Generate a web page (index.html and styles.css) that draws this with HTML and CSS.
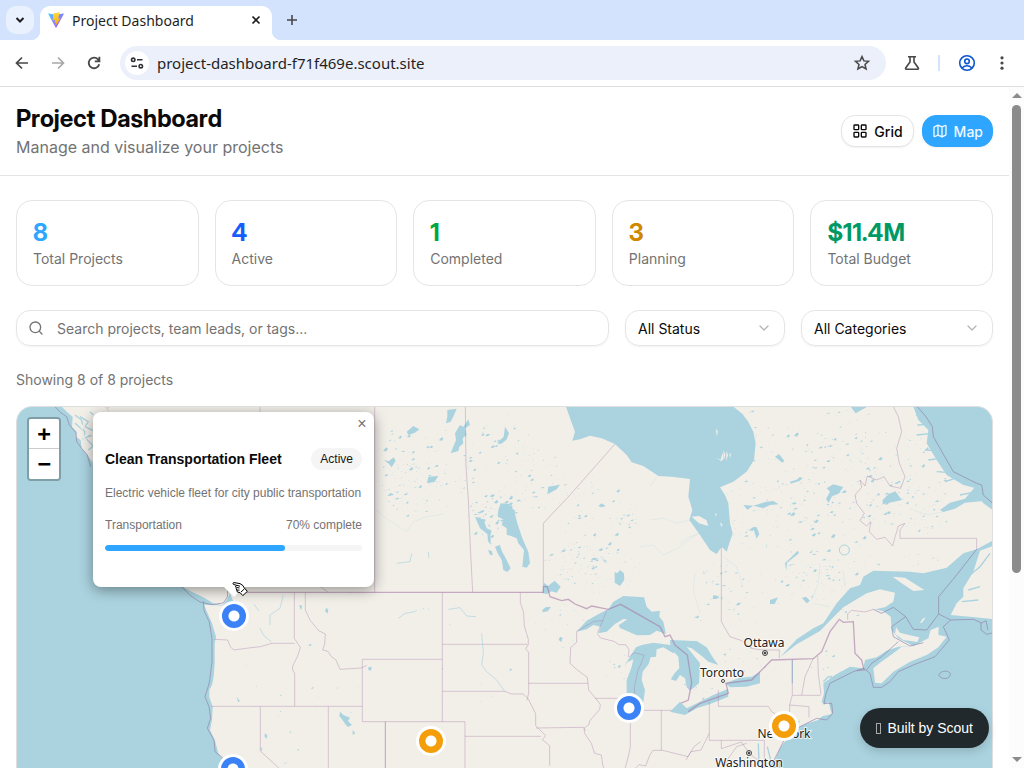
FILE: index.html
```html
<!DOCTYPE html>
<html lang="en">
<head>
<meta charset="utf-8">
<title>Project Dashboard</title>
<link rel="stylesheet" href="styles.css">
</head>
<body>
<div class="browser">
  <div class="tab-strip">
    <button class="tab-search" aria-label="Search tabs"><svg width="10" height="8" viewBox="0 0 10 8"><path d="M1.5 2 5 5.5 8.5 2" fill="none" stroke="#1f1f1f" stroke-width="2"/></svg></button>
    <div class="tab">
      <svg width="16" height="16" viewBox="0 0 16 16"><defs><linearGradient id="va" x1="0" y1="0" x2="1" y2="1"><stop offset="0" stop-color="#41d1ff"/><stop offset="1" stop-color="#bd34fe"/></linearGradient><linearGradient id="vb" x1="0" y1="0" x2="0" y2="1"><stop offset="0" stop-color="#ffd83a"/><stop offset="1" stop-color="#ffa800"/></linearGradient></defs><path d="M.3 2 7.600 15.500q.4.6.8 0L15.800 2q.2-.6-.6-.5L8 2.800.8 1.500Q.1 1.400.3 2z" fill="url(#va)"/><path d="M11.600.3 5.200 1.500l-.4 7 2.400-.5-.6 3 1.400-.4-.8 4L12.400 6.200l-2.200.2z" fill="url(#vb)"/></svg>
      <span class="tab-title">Project Dashboard</span>
      <button class="plain" aria-label="Close tab"><svg width="10" height="10" viewBox="0 0 10 10"><path d="M1.500 1.500l7 7m0-7-7 7" stroke="#1f1f1f" stroke-width="1.700"/></svg></button>
    </div>
    <button class="plain new-tab" aria-label="New tab"><svg width="12" height="12" viewBox="0 0 12 12"><path d="M6 1v10M1 6h10" stroke="#474747" stroke-width="1.600"/></svg></button>
  </div>
  <div class="toolbar">
    <div class="navs">
      <button class="plain nav" aria-label="Back"><svg width="16" height="16" viewBox="0 0 16 16" fill="none" stroke="#474747" stroke-width="1.700"><path d="M14 8H3M8 2.500 2.500 8 8 13.500"/></svg></button>
      <button class="plain nav" aria-label="Forward"><svg width="16" height="16" viewBox="0 0 16 16" fill="none" stroke="#a8a8a8" stroke-width="1.700"><path d="M2 8h11M8 2.500 13.500 8 8 13.500"/></svg></button>
      <button class="plain nav" aria-label="Reload"><svg width="16" height="16" viewBox="0 0 16 16" fill="none" stroke="#474747" stroke-width="1.800"><path d="M13.200 9.200A5.300 5.300 0 1 1 12 4.400L13.200 6M13.400 1.800v4.600H8.800"/></svg></button>
    </div>
    <div class="address">
      <button class="site-info" aria-label="Site information"><svg width="14" height="14" viewBox="0 0 14 14" fill="none" stroke="#303134" stroke-width="1.600"><circle cx="3.200" cy="3.800" r="1.700"/><path d="M7 3.800h5.500M1.500 10.200H7"/><circle cx="10.800" cy="10.200" r="1.700"/></svg></button>
      <input class="url" aria-label="Address" value="project-dashboard-f71f469e.scout.site">
      <button class="plain" aria-label="Bookmark"><svg width="18" height="18" viewBox="0 0 18 18" fill="none" stroke="#474747" stroke-width="1.500"><path d="m9 2.600 1.900 4.300 4.600.4-3.500 3.100 1.100 4.600L9 12.600 4.900 15 6 10.400 2.500 7.300l4.600-.4z"/></svg></button>
    </div>
    <button class="plain" aria-label="Labs"><svg width="16" height="16" viewBox="0 0 16 16" fill="none" stroke="#474747" stroke-width="1.600"><path d="M4 1.800h8M6 2v5L1.700 13q-.5 1.200.6 1.200h11.400q1.100 0 .6-1.200L10 7V2"/></svg></button>
    <span class="divider"></span>
    <button class="plain" aria-label="Profile"><svg width="18" height="18" viewBox="0 0 18 18" fill="none" stroke="#0b57d0" stroke-width="1.600"><circle cx="9" cy="9" r="7.300"/><circle cx="9" cy="7.300" r="2.300"/><path d="M4 14q5-4.500 10 0"/></svg></button>
    <button class="plain menu" aria-label="Menu"><svg width="4" height="16" viewBox="0 0 4 16" fill="#474747"><circle cx="2" cy="2.800" r="1.600"/><circle cx="2" cy="8" r="1.600"/><circle cx="2" cy="13.200" r="1.600"/></svg></button>
  </div>
  <div class="viewport">
    <div class="page">
      <header class="page-header">
        <div>
          <h1>Project Dashboard</h1>
          <p>Manage and visualize your projects</p>
        </div>
        <div class="view-switch">
          <button class="view"><svg width="16" height="16" viewBox="0 0 24 24"><rect x="3" y="3" width="7" height="7" rx="1"/><rect x="14" y="3" width="7" height="7" rx="1"/><rect x="14" y="14" width="7" height="7" rx="1"/><rect x="3" y="14" width="7" height="7" rx="1"/></svg>Grid</button>
          <button class="view view-active"><svg width="16" height="16" viewBox="0 0 24 24"><path d="M14.106 5.553a2 2 0 0 0 1.788 0l3.659-1.830A1 1 0 0 1 21 4.619v12.764a1 1 0 0 1-.553.894l-4.553 2.277a2 2 0 0 1-1.788 0l-4.212-2.106a2 2 0 0 0-1.788 0l-3.659 1.830A1 1 0 0 1 3 19.381V6.618a1 1 0 0 1 .553-.894l4.553-2.277a2 2 0 0 1 1.788 0zM15 5.764v15M9 3.236v15"/></svg>Map</button>
        </div>
      </header>
      <main>
        <section class="stats">
          <div class="stat"><strong class="sky">8</strong><span>Total Projects</span></div>
          <div class="stat"><strong class="blue">4</strong><span>Active</span></div>
          <div class="stat"><strong class="green">1</strong><span>Completed</span></div>
          <div class="stat"><strong class="amber">3</strong><span>Planning</span></div>
          <div class="stat"><strong class="emerald">$11.4M</strong><span>Total Budget</span></div>
        </section>
        <div class="filters">
          <label class="field search"><svg width="16" height="16" viewBox="0 0 24 24"><circle cx="11" cy="11" r="8"/><path d="m21 21-4.300-4.300"/></svg><input type="text" aria-label="Search projects" placeholder="Search projects, team leads, or tags..."></label>
          <label class="field status"><select aria-label="Status"><option>All Status</option></select><svg width="16" height="16" viewBox="0 0 24 24"><path d="m6 9 6 6 6-6"/></svg></label>
          <label class="field category"><select aria-label="Category"><option>All Categories</option></select><svg width="16" height="16" viewBox="0 0 24 24"><path d="m6 9 6 6 6-6"/></svg></label>
        </div>
        <p class="count">Showing 8 of 8 projects</p>
        <section class="map" aria-label="Project map">
          <svg class="tiles" width="975" height="598" viewBox="17 407 975 598">
            <rect x="17" y="407" width="975" height="598" fill="#f2efe9"/>
            <g id="lakes" class="water"></g>
            <g transform="translate(0 400) scale(.333333)">
              <path class="water" d="M0 20H185L205 40 218 50 216 80 230 95 228 110 242 120 245 145 262 165 280 190 400 430 548 560 575 575 610 592 640 610 668 616 680 600 690 580 700 605 684 618 650 616 612 614 625 645 636 670 648 710 644 730 644 790 641 830 636 855 628 870 628 892 638 920 636 960 630 990 645 1022 655 1060 690 1104 640 1120V1820H0Z"/>
              <path class="inlet" d="M240 50l25 15-10 15 25 12M225 70l30 25-5 20 25-8M250 120l20-15M265 150l15-12-20-20M270 35l10 10M225 45l20 15 5 30"/>
              <path class="land" d="M236 55l8 16 10 8-6 12-12-16zM242 90l10 14 12 30-12-10zM570 562l40 10 34 26 12 14-24-8-30-22z"/>
              <path class="sea-line" d="M165 20 182 38 200 50 208 75 228 98 230 125 245 145 262 165 272 200M545 560l25 26 30 20 35 8 35-5 12-18 2-24M610 604l2 28 16 34 8 50v70l-8 62-13 42 12 30 5 35-10 30 20 35 3 35 25 20"/>
              <path class="state" d="M325 20v4M780 20v20M1124 20v558M316 20l10 12M883 578v137l18 28-8 25-15 30v12l6 10v98M643 718l40 2 8 20 10 10 45-6 35-4 35-10h68M916 578v52l14 30 26 32 20 10-2 30-6 18 16 4 8 14 16 12 12 28 64-4 16-8M635 919h452M781 920v133l60 55M985 920v184M1156 965v140M961 560l24 17"/>
              <path class="nation" d="M690 577H1052"/>
              <path class="river" d="M850 585l-10 40-30 20v30M762 613l15 20M780 685l10 20 25 22"/>
              <path class="water" d="M1020 935l10 10 20 8-6 10 12 12-12 6-8-8-10-15-8-10zM975 633l4-10 6 6-2 12zM897 615l10 2-4 14zM794 1000l8 6-2 10-6-6zM1105 802l10-2-2 12-8-2zM710 890l10 14-6 2zM779 1043h8l-3 12zM1058 990l8 10-8 4z"/>
            </g>
            <g transform="translate(360 400) scale(.333333)">
              <path class="water" d="M415 330 422 310 445 312 462 330 472 370 487 415 505 455 510 490 500 503 487 500 492 450 475 430 470 415 453 408 440 404 440 385 425 375 430 358 413 350ZM345 350 370 358 380 385 395 392 390 410 382 402 360 385ZM382 400l10 8 0 26-8-10zM384 450l12 4 2 12-8-2zM405 440l14-6 8 22 10 18 15 31-10 11-12-6-5-30-12-20zM325 58 330 75 315 85 320 105 308 115 310 130 298 140 295 153 272 160 288 120 285 100 300 75 310 80ZM262 30 290 26 280 50 272 65 258 70 262 50ZM140 95 160 78 178 88 165 98 145 105ZM435 80l12 20-8 20-16 12-12-2 20-20zM72 180l14 4 15-12 6 10-12 20-8-10zM205 230l30-2-12 18-22 4zM565 260l35-6-10 14-28 15zM764 516 772 520 780 510 792 520 793 540 780 558 764 548ZM552 548l12 10 20-16 18 18-12 18-16-4-12 8-15-2zM547 630l10-8 16-2-10 14-15 3zM600 710l8 4-4 12-8-6zM715 318l10-8 12 8-12 4z"/>
              <path class="water" d="M650 695 680 662 720 640 745 628 760 605 790 588 852 592 860 620 875 635 900 632 898 650 910 665 918 702 890 692 870 705 830 706 806 695 780 684 776 676 802 658 790 657 765 672 740 695 715 700 722 680 700 675 680 688ZM793 798 810 770 828 742 845 735 880 728 930 735 955 748 940 760 910 742 890 748 888 770 872 772 866 792 848 815 845 840 855 870 850 905 835 930 815 915 800 880 800 840 815 800 820 778 803 786ZM930 720 980 722 1020 735 1035 748 1005 744 980 740 1000 765 1020 790 1017 850 990 872 980 862 975 835 960 825 948 843 932 838 945 818 958 805 955 770 932 745Z"/>
              <path class="state" d="M316 20 318 200 325 300 331 440 338 577M765 132 630 285 550 370V560M247 578V965M7 778H247M7 778v187H315v145M247 733H502M247 874H435l20 8 35 0 15 15 15 30 7 15 0 35 30 30-10 12 22 18v60M481 578v30l10 30 2 40 12 40v15l-8 14 9 10v122l-5 22M506 850h178M684 850l2 20 15 18 20 25-2 15-30 35-2 10-15 12 2 15 20 30 10 30 20 5 5 35 13 12M528 984l142-2 7 10M315 1009H543M705 895H780M650 695v32l-18 15-2 48 22 20 30 22 2 18M712 702l10 12 40 10 15 10 20 0 10 15-2 22M811 960v80l-5 25-12 45M850 931H960M904 931v120l-25 0-10 15-12 32-20-4-15 15M904 1050l40 10 40 10 18-30 20-15M76 965v140M728 663l12-32M712 700l16-38-26 2-52 30M808 770l15-12 30 8-20 48-10 50 3 36"/>
              <path class="nation" d="M-30 577H550V560H562L570 590 605 602 625 598 645 612 680 626 695 618 745 628 782 613 900 680 915 710 930 705 945 735 982 765 995 848 985 900 962 910 968 928 985 935"/>
              <path class="river" d="M265 628l35-5 20 25 27 2M115 655l20-15 30-5 5-5M365 700l5 60-5 35 15 20 30 25 25 35M110 490l40-5 5-25M205 455l2 20"/>
              <path class="faint" d="M870 360l40-5 40 15 40-10M840 440l40-5 30 30 40-18 40-30 30-20M890 230l-20 30M50 330l20 20 70 45 20-30 40-15 50-8"/>
            </g>
            <g transform="translate(680 400) scale(.333333)">
              <path class="water" d="M-342 20 -328 60 -315 95 -323 122 -300 118 -270 107 -235 115 -195 132 -160 165 -145 187 -110 198 -65 228 -25 230 30 237 25 290 37 330 28 360 60 405 90 450 110 462 125 440 140 455 148 430 158 400 150 370 145 310 135 285 120 262 160 245 200 215 222 180 227 130 220 95 205 65 185 40 160 20Z"/>
              <path class="land" d="M35 350l22-2 22 12 6 18-28-8zM108 172l14 8 6-22 3 18-8 8zM130 150l6 14-4 14zM140 152l4 14-6 18zM148 164l5-6-2 16zM108 85l6 10-4 14zM120 368l8 5-4 8zM105 338l6 6-4 5z"/>
              <path class="water" d="M0 722 50 723 80 742 100 775 115 795 85 785 68 770 35 745 0 735ZM-30 935 0 905 20 925 60 905 100 885 143 867 145 890 90 912 50 925 15 945ZM135 850 180 833 215 830 240 815 240 850 200 860 150 862ZM190 315l30 2 40-12 20-2 16 10-26 2-20 10-30-8-18 12zM440 265l20-12 30 8-14 20-20 8-10 20-8-12 12-22zM608 300l18-18 20-8 20 26-24 5-34 8zM315 490l38-38 4 8-36 28-2 24zM366 594l12-4 12 12-10 8zM270 600l24-8-10 20-14 0zM285 170l12-8 16 20-6 6zM100 585l16 4-6 8-12 0zM218 380l12 2 8 20-8 14zM330 245l40-12-12 10-26 8zM512 20h50l-35 20zM780 330l30-22 45-12 30-35 35 10-25 20 15 12-55 5-30 18-35 10z"/>
              <path class="water" d="M700 20 715 60 745 90 740 130 770 180 800 225 850 255 900 268 890 285 910 310 960 345V20ZM960 410 890 448 850 460 800 503 730 520 690 515 580 512 550 530 540 555 510 565 470 610 430 670 400 685 350 718 300 772 350 733 420 693 460 652 490 622 560 580 600 568 645 578 640 605 615 622 585 628 610 634 632 650 635 690 655 715 700 738 655 740 620 752 590 772 555 780 550 805 510 800 465 825 430 850 432 880 425 905 432 915 445 905 455 942 420 950 395 962 350 985 360 962 325 972 332 1000 300 1045 275 1104V1820H1000Z"/>
              <path class="land" d="M580 805 600 788 640 760 665 740 700 738 745 715 752 690 776 680 775 705 800 710 775 742 740 765 690 785 640 815 605 850 585 848ZM648 682 660 698 690 706 718 712 712 726 670 720 645 702ZM638 530 675 533 733 570 700 573 665 550ZM960 430 900 452 880 515 850 565 850 590 830 610 812 645 870 650 960 660ZM720 668l8-12 10-4-12 16zM360 965l70-20-15 15-40 12z"/>
              <path class="inlet" d="M708 45l20 5M712 75l30-2M710 105l45-5M735 150l30 2M745 180l30-4M770 215l30 2M795 245l25-8M840 285l50-10M430 845l15-15 20 5 20-20M337 780v70M235 1030l2 60M262 1040l10 40M930 460l-30 40-30 25M900 560l-35 10M895 600l-50 5"/>
              <path class="sea-line" d="M712 20 738 50 757 80 760 110 800 180 820 215 890 250 905 255 910 285 940 312M890 448 830 525 776 590V642L740 690 700 688 677 650 640 622 605 640 580 628M776 642 812 660 880 658 903 668 903 690 920 703 940 698M903 670l15-8 6 28M812 660 790 680 808 720 765 770 700 795 655 815 630 845 605 862 580 862 570 820 550 805 520 815 450 850 438 880 432 910 455 910 458 940 440 960 410 955 350 985 315 1015 290 1065 270 1104M677 650l-42 30 5 30 50 28 40-10M655 725l-50 45-30 20-15 20M776 825c5-15 35-15 35-2s-25 20-35 2"/>
              <path class="state" d="M640 20 655 50 665 95 650 145 658 190 675 230 662 265 630 258 612 230 590 240 562 228 555 258 540 240 545 262 525 285 530 310 553 340 540 362 560 378 572 365 568 395 590 418 615 412 638 438 645 412 655 378 675 370 660 390 660 415H890V450M124 440V665L150 710 185 722 215 745 245 750 298 750V775M115 870V919H265L275 935 300 950M88 905V1021H253V1104M337 778v106l-8 30v35M337 886h85M329 915l58 5v32M413 768l2 55 8 60M400 775l-25 55-10 55M88 1000l-25 50-30 5-15 25M124 1021v25l30-10 30-10 25 35 25 20M200 1030l-30 10-25 35-15 29M580 628l-25 8-40-5-12 10v18"/>
              <path class="nation" d="M25 935 60 910 145 880 138 850 215 840 275 780 400 776 425 755 450 695 478 658 490 667 520 665 525 760 545 780 552 810 530 812"/>
              <circle class="ring" cx="493" cy="450" r="15"/>
              <path class="faint" d="M0 430l25-18 30-10M130 470l40 30 20 60M420 490l-5 60-20 50M400 610l50 10M700 330l40 15 50-10M490 510l5 50M45 520l-5 50 20 70"/>
            </g>
            <g class="places">
              <text x="764" y="647">Ottawa</text><circle cx="765" cy="653" r="2.500"/><circle class="dot" cx="765" cy="653" r="1"/>
              <text x="722" y="677">Toronto</text><circle cx="723" cy="681" r="1.500"/>
              <text x="784" y="738">New York</text>
              <text x="749" y="767">Washington</text><circle cx="749" cy="753" r="2.500"/><circle class="dot" cx="749" cy="753" r="1"/>
            </g>
          </svg>
          <button class="pin pin-active seattle" aria-label="Clean Transportation Fleet"></button>
          <button class="pin pin-active bay-area" aria-label="San Francisco project"></button>
          <button class="pin pin-planning denver" aria-label="Denver project"></button>
          <button class="pin pin-active chicago" aria-label="Chicago project"></button>
          <button class="pin pin-planning new-york" aria-label="New York project"></button>
          <div class="zoom"><button aria-label="Zoom in">+</button><button aria-label="Zoom out">−</button></div>
          <article class="popup">
            <button class="popup-close" aria-label="Close popup">×</button>
            <div class="popup-row"><h2>Clean Transportation Fleet</h2><span class="badge">Active</span></div>
            <p>Electric vehicle fleet for city public transportation</p>
            <div class="popup-row meta"><span>Transportation</span><span>70% complete</span></div>
            <div class="progress"><div class="progress-fill" style="width:70%"></div></div>
            <span class="popup-tip"></span>
          </article>
          <svg class="cursor" width="16" height="16" viewBox="0 0 16 16"><path d="M1 1.500Q1 .6 2 .6l6 1 3 2 1 2 3.300 3.800-4.500 4.200-2.500-2.800-3-.8-.5-2-.8-1.600L4.500 6 3.400 5 4.600 3.300 2 2.600Q1 2.400 1 1.500z" fill="#fff" stroke="#000"/><path d="M4.600 3.300 8 4.200M4.500 5.500l3 .5M5 8l2.500.2M9 10l3.500-3.200" fill="none" stroke="#000"/></svg>
        </section>
      </main>
    </div>
    <div class="scrollbar"><span class="arrow arrow-up"></span><span class="thumb"></span><span class="arrow arrow-down"></span></div>
  </div>
  <button class="scout"><span class="mark"></span>Built by Scout</button>
</div>
<script src="map.js"></script>
</body>
</html>
```
FILE: styles.css
```css
* { box-sizing: border-box; }
body { margin: 0; font-family: Inter, "Liberation Sans", sans-serif; color: #0a0a0a; background: #fff; }
h1, h2, p { margin: 0; }
button, input, select { font: inherit; color: inherit; margin: 0; }
svg { flex: none; display: block; }
.browser { height: 100vh; display: flex; flex-direction: column; overflow: hidden; position: relative; }
.plain { border: 0; background: none; padding: 0; display: flex; align-items: center; justify-content: center; }

.tab-strip { display: flex; height: 40px; background: #d3e3fd; padding: 6px 6px 0; font-family: "Noto Sans", sans-serif; }
.tab-search { width: 28px; height: 28px; border: 0; border-radius: 10px; background: #e9f0fe; padding: 0; display: flex; align-items: center; justify-content: center; }
.tab { display: flex; align-items: center; gap: 8px; width: 232px; margin-left: 6px; padding: 0 11px 6px 8px; background: #fff; border-radius: 10px 10px 0 0; font-size: 14px; color: #1f1f1f; position: relative; }
.tab::before, .tab::after { content: ""; position: absolute; bottom: 0; width: 10px; height: 10px; }
.tab::before { right: 100%; background: radial-gradient(circle at 0 0, #d3e3fd 10px, #fff 11px); }
.tab::after { left: 100%; background: radial-gradient(circle at 100% 0, #d3e3fd 10px, #fff 11px); }
.tab-title { flex: 1; }
.new-tab { height: 28px; width: 40px; }
.toolbar { display: flex; align-items: center; gap: 18px; height: 47px; padding: 0 14px; background: #fff; border-bottom: 1px solid #dcdee2; font-family: "Noto Sans", sans-serif; }
.navs { display: flex; gap: 20px; }
.nav { width: 16px; }
.address { flex: 1; display: flex; align-items: center; height: 34px; padding: 0 15px 0 5px; border-radius: 17px; background: #ecf0fa; }
.site-info { width: 24px; height: 24px; padding: 0; border: 0; border-radius: 50%; background: #fff; display: flex; align-items: center; justify-content: center; }
.url { flex: 1; min-width: 0; border: 0; padding: 0 8px; background: none; font-size: 15px; color: #1f1f1f; }
.divider { width: 2px; height: 16px; background: #d3e3fd; }
.menu { width: 16px; }

.viewport { flex: 1; min-height: 0; display: flex; }
.page { flex: 1; min-width: 0; overflow: hidden; }
.scrollbar { width: 15px; background: #fcfcfc; display: flex; flex-direction: column; align-items: center; padding: 6px 0; }
.arrow { border: 5px solid transparent; border-top-width: 0; border-bottom-width: 0; }
.arrow-up { border-bottom: 5px solid #8b8b8b; }
.arrow-down { border-top: 5px solid #8b8b8b; margin-top: auto; }
.thumb { width: 9px; height: 70%; margin-top: 7px; border-radius: 5px; background: #8b8b8b; }

.page-header { display: flex; align-items: center; justify-content: space-between; padding: 16px; border-bottom: 1px solid #e5e5e5; }
h1, .stat strong { font-family: "Inter Display", Inter, sans-serif; font-variation-settings: "opsz" 24; }
h1 { font-size: 24px; line-height: 32px; font-weight: 700; }
.page-header p { font-size: 16px; line-height: 24px; color: #737373; }
.view-switch { display: flex; gap: 8px; }
.view { display: flex; align-items: center; gap: 6px; height: 32px; padding: 0 10px; border: 1px solid #e5e5e5; border-radius: 14px; background: #fff; box-shadow: 0 1px 2px rgba(0,0,0,.06); font-size: 14px; font-weight: 500; }
.view svg, .field svg { fill: none; stroke: currentColor; stroke-width: 2; stroke-linecap: round; stroke-linejoin: round; }
.view-active { background: #2ea6ff; border-color: #2ea6ff; color: #f0f9ff; padding: 0 9px; }
main { padding: 24px 16px; }
.stats { display: grid; grid-template-columns: repeat(5, 1fr); gap: 16px; }
.stat { display: flex; flex-direction: column; padding: 16px; border: 1px solid #e5e5e5; border-radius: 16px; }
.stat strong { font-size: 24px; line-height: 32px; }
.stat span { font-size: 14px; line-height: 20px; color: #737373; }
.sky { color: #2ea6ff; } .blue { color: #155dfc; } .green { color: #00a63e; } .amber { color: #d08700; } .emerald { color: #009966; }
.filters { display: flex; gap: 16px; margin-top: 24px; }
.field { display: flex; align-items: center; height: 36px; border: 1px solid #e5e5e5; border-radius: 14px; box-shadow: 0 1px 2px rgba(0,0,0,.05); font-size: 14px; padding: 0 12px; }
.field input, .field select { flex: 1; min-width: 0; border: 0; padding: 0; background: none; outline: 0; appearance: none; }
.field input::placeholder { color: #737373; opacity: 1; }
.field svg { color: #b5b5b5; }
.search { flex: 1; gap: 13px; padding: 0 11px; }
.search svg { color: #737373; }
.status { width: 160px; }
.category { width: 192px; }
.count { margin: 24px 0 16px; font-size: 14px; line-height: 20px; color: #737373; }

.map { position: relative; height: 600px; border: 1px solid #dedede; border-radius: 16px; overflow: hidden; background: #aad3df; font-family: "Liberation Sans", sans-serif; }
.water { fill: #aad3df; }
.land { fill: #f2efe9; }
.inlet, .river, .faint { fill: none; stroke: #aad3df; stroke-width: 4; }
.river { stroke-width: 2; }
.faint { stroke-width: 2; opacity: .35; }
.state { fill: none; stroke: #a679a6; stroke-width: 3; opacity: .38; }
.sea-line { fill: none; stroke: #9080a8; stroke-width: 3; opacity: .65; }
.nation { fill: none; stroke: #a679a6; stroke-width: 4; opacity: .6; }
.ring { fill: none; stroke: #aad3df; stroke-width: 3; }
.places { font: 12px "Noto Sans", sans-serif; }
.places text { text-anchor: middle; fill: #222; stroke: #fff; stroke-width: 2px; stroke-opacity: .7; paint-order: stroke; }
.places circle { fill: #fff; stroke: #444; }
.places .dot { fill: #333; }
.pin { position: absolute; width: 30px; height: 30px; margin: -15px 0 0 -15px; padding: 0; border: 3px solid #fff; border-radius: 50%; }
.pin-active { background: radial-gradient(circle, #fff 5px, #3b82f6 6px); }
.pin-planning { background: radial-gradient(circle, #fff 5px, #f59e0b 6px); }
.seattle { left: 217px; top: 209px; }
.bay-area { left: 216px; top: 362px; }
.denver { left: 414px; top: 334px; }
.chicago { left: 612px; top: 301px; }
.new-york { left: 767px; top: 319px; }
.zoom { position: absolute; left: 10px; top: 10px; border: 2px solid rgba(0,0,0,.25); border-radius: 4px; background-clip: padding-box; display: flex; flex-direction: column; }
.zoom button { width: 30px; height: 30px; padding: 0; border: 0; border-radius: 0 0 2px 2px; background: #fff; font: bold 22px/30px "DejaVu Sans Mono", monospace; color: #000; }
.zoom button:first-child { border-bottom: 1px solid #ccc; border-radius: 2px 2px 0 0; }
.popup { position: absolute; left: 76px; top: 5px; width: 281px; padding: 36px 12px; border-radius: 8px; background: #fff; box-shadow: 0 3px 14px rgba(0,0,0,.4); font-size: 12px; color: #737373; }
.popup-row { display: flex; align-items: center; justify-content: space-between; }
.popup h2 { font-size: 14px; line-height: 20px; color: #0a0a0a; }
.popup p { margin: 15px 0 16px; line-height: 16px; white-space: nowrap; }
.badge { padding: 3px 9px; border-radius: 11px; line-height: 16px; background: #f5f5f5; color: #171717; }
.meta { line-height: 16px; }
.progress { height: 6px; margin-top: 12px; border-radius: 3px; background: #f5f5f5; overflow: hidden; }
.progress-fill { height: 100%; border-radius: 3px; background: #2ea6ff; }
.popup-close { position: absolute; right: 0; top: 0; width: 24px; height: 24px; padding: 0; border: 0; background: none; font-size: 16px; color: #757575; }
.popup-tip { position: absolute; left: 50%; top: 100%; margin-left: -10px; border: 10px solid transparent; border-top-color: #fff; border-bottom: 0; }
.cursor { position: absolute; left: 215px; top: 175px; }
.scout { position: absolute; right: 35px; bottom: 20px; height: 40px; padding: 0 16px; border: 0; border-radius: 20px; display: flex; align-items: center; gap: 6px; background: #22292c; color: #fff; font: 14px "Liberation Sans", sans-serif; box-shadow: 0 4px 10px rgba(0,0,0,.15); }
.mark { width: 5px; height: 11px; border: 1px solid #aaa; }
```
FILE: map.js
```js
// Scatters small lakes over the areas of the map that are dense with them.
// Each region: centre x, centre y, radius x, radius y, number of lakes, largest lake.
const regions = [
  [395, 470, 22, 40, 60, 3], [440, 465, 35, 45, 60, 3], [420, 490, 45, 30, 50, 3],
  [500, 455, 40, 42, 60, 3], [530, 485, 40, 35, 60, 3], [490, 510, 25, 15, 60, 4],
  [590, 520, 50, 45, 60, 3], [575, 562, 32, 20, 70, 3], [600, 570, 40, 25, 40, 2],
  [485, 530, 16, 16, 20, 3], [625, 520, 10, 8, 20, 3], [755, 440, 40, 30, 50, 3],
  [770, 510, 60, 40, 100, 4], [830, 485, 50, 40, 80, 4], [845, 440, 45, 30, 60, 3],
  [885, 495, 30, 30, 70, 4], [840, 550, 40, 50, 60, 3], [760, 585, 55, 40, 60, 3],
  [820, 580, 20, 22, 40, 3], [920, 470, 30, 45, 80, 3], [925, 520, 25, 15, 30, 2],
  [720, 600, 30, 40, 40, 2], [745, 660, 25, 15, 20, 2], [830, 670, 25, 20, 15, 2],
  [450, 670, 60, 70, 14, 2], [300, 680, 60, 60, 14, 2], [560, 620, 25, 30, 20, 2],
  [260, 740, 40, 40, 12, 2], [700, 690, 25, 10, 10, 2], [620, 670, 15, 15, 12, 2],
  [900, 560, 40, 8, 14, 2], [960, 590, 20, 20, 20, 2], [850, 610, 12, 8, 10, 2]
];
let seed = 41;
const rand = () => (seed = (seed * 16807) % 2147483647) / 2147483647;
let d = "";
for (const [cx, cy, rx, ry, count, size] of regions) {
  for (let i = 0; i < count; i++) {
    const a = rand() * 6.283, r = Math.sqrt(rand());
    const x = cx + Math.cos(a) * r * rx, y = cy + Math.sin(a) * r * ry;
    const w = .5 + Math.pow(rand(), 4) * size * .8, h = w * (.3 + rand() * .9);
    d += `M${x.toFixed(1)} ${y.toFixed(1)}l${w.toFixed(1)} ${(-h).toFixed(1)} ${(w * .7).toFixed(1)} ${(h * .3).toFixed(1)} ${(-w * .6).toFixed(1)} ${(h * .9).toFixed(1)}z`;
  }
}
const path = document.createElementNS("http://www.w3.org/2000/svg", "path");
path.setAttribute("d", d);
document.getElementById("lakes").appendChild(path);
```
